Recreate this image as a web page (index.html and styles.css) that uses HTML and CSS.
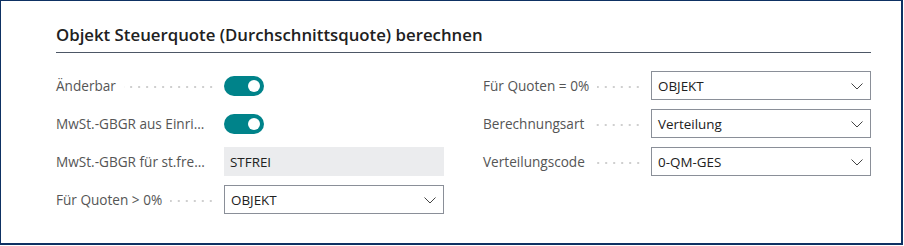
FILE: index.html
```html
<!DOCTYPE html>
<html lang="de">
<head>
<meta charset="utf-8">
<link rel="stylesheet" href="styles.css">
</head>
<body>
<div class="frame">
  <section class="group">
    <h2 class="group-title">Objekt Steuerquote (Durchschnittsquote) berechnen</h2>
    <div class="cols">
      <div class="col">
        <div class="row">
          <div class="label"><span class="text">Änderbar</span><span class="leader"></span></div>
          <div class="control"><span class="toggle"><span class="knob"></span></span></div>
        </div>
        <div class="row">
          <div class="label"><span class="text">MwSt.-GBGR aus Einri...</span><span class="leader"></span></div>
          <div class="control"><span class="toggle"><span class="knob"></span></span></div>
        </div>
        <div class="row">
          <div class="label"><span class="text">MwSt.-GBGR für st.fre...</span><span class="leader"></span></div>
          <div class="control"><div class="field readonly">STFREI</div></div>
        </div>
        <div class="row">
          <div class="label"><span class="text">Für Quoten &gt; 0%</span><span class="leader"></span></div>
          <div class="control"><div class="field select"><span>OBJEKT</span><svg class="chev" width="12" height="7" viewBox="0 0 12 7"><path d="M0.5 0.5 L6 6 L11.5 0.5" fill="none" stroke="#444" stroke-width="1"/></svg></div></div>
        </div>
      </div>
      <div class="col">
        <div class="row">
          <div class="label"><span class="text">Für Quoten = 0%</span><span class="leader"></span></div>
          <div class="control"><div class="field select"><span>OBJEKT</span><svg class="chev" width="12" height="7" viewBox="0 0 12 7"><path d="M0.5 0.5 L6 6 L11.5 0.5" fill="none" stroke="#444" stroke-width="1"/></svg></div></div>
        </div>
        <div class="row">
          <div class="label"><span class="text">Berechnungsart</span><span class="leader"></span></div>
          <div class="control"><div class="field select"><span>Verteilung</span><svg class="chev" width="12" height="7" viewBox="0 0 12 7"><path d="M0.5 0.5 L6 6 L11.5 0.5" fill="none" stroke="#444" stroke-width="1"/></svg></div></div>
        </div>
        <div class="row">
          <div class="label"><span class="text">Verteilungscode</span><span class="leader"></span></div>
          <div class="control"><div class="field select"><span>0-QM-GES</span><svg class="chev" width="12" height="7" viewBox="0 0 12 7"><path d="M0.5 0.5 L6 6 L11.5 0.5" fill="none" stroke="#444" stroke-width="1"/></svg></div></div>
        </div>
      </div>
    </div>
  </section>
</div>
</body>
</html>
```
FILE: styles.css
```css
* { box-sizing: border-box; }
html, body { margin: 0; padding: 0; background: #fff; }
body { font-family: "Open Sans", "Noto Sans", sans-serif; }
.frame {
  width: 903px;
  height: 245px;
  border: 1px solid #0e3163;
  border-right-width: 2px;
  border-bottom-width: 2px;
  padding: 23px 0 0 55px;
}
.group { width: 815px; }
.group-title {
  margin: 0;
  font-size: 16.8px;
  font-weight: 600;
  color: #212121;
  line-height: 22px;
  padding-bottom: 6px;
  border-bottom: 1px solid #4d5766;
}
.cols {
  display: grid;
  grid-template-columns: 388px 388px;
  column-gap: 39px;
  margin-top: 18px;
}
.row {
  display: flex;
  align-items: center;
  height: 29px;
  margin-bottom: 9px;
}
.label {
  width: 168px;
  display: flex;
  align-items: center;
  padding-right: 9px;
  font-size: 13.6px;
  color: #555;
  white-space: nowrap;
}
.leader {
  flex: 1;
  height: 2px;
  margin: 3px 0 0 8px;
  background-image: radial-gradient(circle, #cfcfcf 0.9px, transparent 1.1px);
  background-size: 8px 2px;
  background-position: right center;
  background-repeat: repeat-x;
}
.control { width: 220px; display: flex; align-items: center; }
.toggle {
  width: 40px;
  height: 20px;
  border-radius: 10px;
  background: #00838a;
  display: flex;
  align-items: center;
  justify-content: flex-end;
  padding-right: 4px;
}
.knob { width: 12px; height: 12px; border-radius: 50%; background: #fff; }
.field {
  width: 220px;
  height: 29px;
  font-size: 13.4px;
  color: #212121;
  display: flex;
  align-items: center;
  padding: 0 7px 0 6px;
}
.readonly { background: #ebecee; }
.select {
  border: 1px solid #8a8f98;
  justify-content: space-between;
}
.chev { display: block; margin-top: 1px; }
```
